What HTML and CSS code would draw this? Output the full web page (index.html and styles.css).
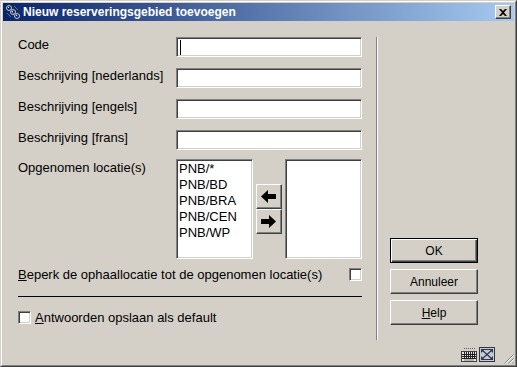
FILE: index.html
```html
<!DOCTYPE html>
<html lang="nl">

<head>
    <meta charset="UTF-8">
    <meta name="viewport" content="width=device-width, initial-scale=1.0">
    <title>Nieuw reserveringsgebied toevoegen</title>
    <link rel="stylesheet" href="styles.css">
</head>

<body>
    <div class="window">
        <div class="frame">
            <div class="titlebar">
                <svg class="title-icon" width="16" height="16" viewBox="0 0 16 16">
                    <g fill="none" stroke="#c8c8c8" stroke-width="1">
                        <circle cx="4" cy="4" r="2.5"/>
                        <circle cx="8" cy="8" r="2.5"/>
                        <circle cx="12" cy="12" r="2.5"/>
                    </g>
                    <g fill="none" stroke="#707070" stroke-width="1">
                        <path d="M2 9 L6 13 M9 2 L13 6 M5 6 L10 11"/>
                    </g>
                    <g fill="#ffffff">
                        <rect x="3" y="3" width="1" height="1"/>
                        <rect x="7" y="7" width="1" height="1"/>
                        <rect x="11" y="11" width="1" height="1"/>
                    </g>
                </svg>
                <span class="title">Nieuw reserveringsgebied toevoegen</span>
                <div class="close">
                    <svg width="8" height="7" viewBox="0 0 8 7">
                        <path d="M0 0 L2 0 L4 2 L6 0 L8 0 L5 3.5 L8 7 L6 7 L4 5 L2 7 L0 7 L3 3.5 Z" fill="#000"/>
                    </svg>
                </div>
            </div>

            <div class="main">
                <div class="form">
                    <div class="row">
                        <div class="label">Code</div>
                        <div class="field"><span class="caret"></span></div>
                    </div>
                    <div class="row">
                        <div class="label">Beschrijving [nederlands]</div>
                        <div class="field"></div>
                    </div>
                    <div class="row">
                        <div class="label">Beschrijving [engels]</div>
                        <div class="field"></div>
                    </div>
                    <div class="row">
                        <div class="label">Beschrijving [frans]</div>
                        <div class="field"></div>
                    </div>
                    <div class="row row-lists">
                        <div class="label">Opgenomen locatie(s)</div>
                        <ul class="listbox">
                            <li>PNB/*</li>
                            <li>PNB/BD</li>
                            <li>PNB/BRA</li>
                            <li>PNB/CEN</li>
                            <li>PNB/WP</li>
                        </ul>
                        <div class="arrows">
                            <div class="arrow-btn">
                                <svg width="16" height="13" viewBox="0 0 16 13">
                                    <polygon points="0,6.5 7,0 7,4 15,4 15,9 7,9 7,13" fill="#000"/>
                                </svg>
                            </div>
                            <div class="arrow-btn">
                                <svg width="16" height="13" viewBox="0 0 16 13">
                                    <polygon points="15,6.5 8,0 8,4 0,4 0,9 8,9 8,13" fill="#000"/>
                                </svg>
                            </div>
                        </div>
                        <ul class="listbox"></ul>
                    </div>
                    <div class="check-row limit">
                        <span><u>B</u>eperk de ophaallocatie tot de opgenomen locatie(s)</span>
                        <span class="checkbox"></span>
                    </div>
                    <div class="rule"></div>
                    <div class="check-row save">
                        <span class="checkbox"></span>
                        <span><u>A</u>ntwoorden opslaan als default</span>
                    </div>
                </div>

                <div class="separator"></div>

                <div class="buttons">
                    <div class="btn default">OK</div>
                    <div class="btn">Annuleer</div>
                    <div class="btn"><u>H</u>elp</div>
                </div>
            </div>

            <div class="statusbar">
                <svg class="status-icon" width="16" height="15" viewBox="0 0 16 15">
                    <path d="M3 1.5 H14" stroke="#606060" stroke-width="1" stroke-dasharray="1 1"/>
                    <rect x="0.5" y="4.5" width="15" height="10" fill="#e8e8e8" stroke="#404040"/>
                    <g stroke="#202020" stroke-width="1">
                        <path d="M1 7.5 H15 M1 9.5 H15 M1 11.5 H15"/>
                        <path d="M3.5 5 V12 M5.5 5 V12 M7.5 5 V12 M9.5 5 V12 M11.5 5 V12 M13.5 5 V12"/>
                    </g>
                    <path d="M3 13 H13" stroke="#808080"/>
                </svg>
                <svg class="status-icon expand" width="16" height="15" viewBox="0 0 16 15">
                    <rect x="0.5" y="0.5" width="15" height="14" fill="#c4cad8" stroke="#303848"/>
                    <g stroke="#303848" stroke-width="1.2" fill="none">
                        <path d="M3 3 L13 12 M13 3 L3 12"/>
                        <path d="M3 2.5 H13 M3 12.5 H13"/>
                    </g>
                    <g fill="#303848">
                        <polygon points="2,2 6,2 2,6"/>
                        <polygon points="14,2 10,2 14,6"/>
                        <polygon points="2,13 6,13 2,9"/>
                        <polygon points="14,13 10,13 14,9"/>
                    </g>
                </svg>
                <svg class="grip" width="12" height="12" viewBox="0 0 12 12">
                    <g stroke="#808080" stroke-width="1">
                        <path d="M11.5 2.5 L2.5 11.5 M11.5 6.5 L6.5 11.5 M11.5 10.5 L10.5 11.5"/>
                    </g>
                    <g stroke="#ffffff" stroke-width="1">
                        <path d="M11.5 3.5 L3.5 11.5 M11.5 7.5 L7.5 11.5"/>
                    </g>
                </svg>
            </div>
        </div>
    </div>
</body>

</html>
```

FILE: styles.css
```css
* {
    margin: 0px;
    padding: 0px;
    box-sizing: border-box;
    list-style: none;
}

body {
    width: 517px;
    height: 367px;
    overflow: hidden;
    background-color: #d4d0c8;
    font-family: "Liberation Sans", Arial, sans-serif;
    font-size: 13px;
    color: #000;
}

.window {
    height: 367px;
    border: 1px solid;
    border-color: #d4d0c8 #404040 #404040 #d4d0c8;
}

.frame {
    height: 100%;
    padding: 1px;
    border: 1px solid;
    border-color: #fff #808080 #808080 #fff;
    display: flex;
    flex-direction: column;
}

.titlebar {
    height: 18px;
    flex-shrink: 0;
    padding: 0 3px 0 2px;
    background: linear-gradient(to right, #0a246a, #a6caf0);
    display: flex;
    align-items: center;
}

.title-icon {
    margin-right: 2px;
}

.title {
    flex: 1;
    color: #fff;
    font-weight: bold;
    font-size: 12px;
}

.close {
    width: 16px;
    height: 14px;
    background-color: #d4d0c8;
    border: 1px solid;
    border-color: #fff #404040 #404040 #fff;
    box-shadow: inset -1px -1px #808080;
    display: flex;
    align-items: center;
    justify-content: center;
}

.main {
    flex: 1;
    display: flex;
    padding: 16px 0 1px 15px;
}

.form {
    width: 344px;
}

.row {
    display: flex;
    height: 20px;
    margin-bottom: 11px;
}

.label {
    width: 158px;
    line-height: 15px;
}

.field {
    width: 186px;
    height: 20px;
    padding: 2px 0 0 3px;
    background-color: #fff;
    border: 1px solid;
    border-color: #808080 #fff #fff #808080;
    box-shadow: inset 1px 1px #404040, inset -1px -1px #d4d0c8;
}

.caret {
    display: block;
    width: 1px;
    height: 15px;
    background-color: #000;
}

.row-lists {
    height: 100px;
    margin-top: -2px;
    margin-bottom: 9px;
}

.row-lists .label {
    padding-top: 1px;
}

.listbox {
    width: 77px;
    height: 100px;
    padding: 1px 0 0 2px;
    background-color: #fff;
    border: 1px solid;
    border-color: #808080 #fff #fff #808080;
    box-shadow: inset 1px 1px #404040, inset -1px -1px #d4d0c8;
    line-height: 16px;
}

.arrows {
    display: flex;
    flex-direction: column;
    justify-content: center;
    margin: 0 3px;
}

.arrow-btn {
    width: 26px;
    height: 25px;
    border: 1px solid;
    border-color: #fff #404040 #404040 #fff;
    box-shadow: inset -1px -1px #808080;
    display: flex;
    align-items: center;
    justify-content: center;
}

.check-row {
    display: flex;
    line-height: 13px;
}

.limit {
    justify-content: space-between;
    align-items: flex-start;
}

.save {
    align-items: center;
    gap: 4px;
    margin-top: 14px;
}

.checkbox {
    width: 13px;
    height: 13px;
    background-color: #fff;
    border: 1px solid;
    border-color: #808080 #fff #fff #808080;
    box-shadow: inset 1px 1px #404040, inset -1px -1px #d4d0c8;
}

.rule {
    height: 1px;
    margin-top: 15px;
    background-color: #000;
}

.separator {
    width: 2px;
    margin-left: 14px;
    border-left: 1px solid #808080;
    border-right: 1px solid #fff;
}

.buttons {
    width: 88px;
    margin-left: 12px;
    padding-bottom: 15px;
    display: flex;
    flex-direction: column;
    justify-content: flex-end;
    gap: 6px;
}

.btn {
    height: 25px;
    font-size: 12px;
    border: 1px solid;
    border-color: #fff #404040 #404040 #fff;
    box-shadow: inset -1px -1px #808080;
    display: flex;
    align-items: center;
    justify-content: center;
}

.btn.default {
    border-color: #000;
    box-shadow: inset 1px 1px #fff, inset -1px -1px #404040, inset -2px -2px #808080;
}

.statusbar {
    height: 23px;
    flex-shrink: 0;
    padding: 6px 0 0 0;
    display: flex;
    justify-content: flex-end;
    align-items: flex-start;
}

.status-icon {
    margin-right: 2px;
}

.status-icon.expand {
    margin-right: 7px;
}

.grip {
    align-self: flex-end;
}
```
